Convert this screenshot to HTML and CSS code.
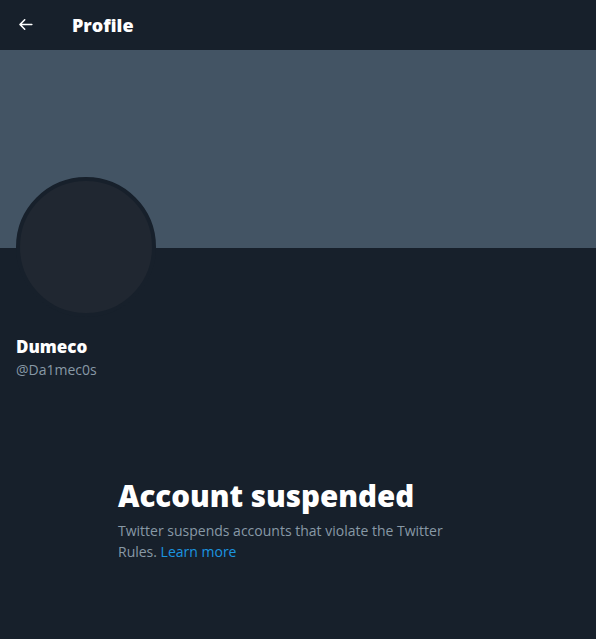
FILE: index.html
```html
<!DOCTYPE html>
<html>
<head>
<meta charset="utf-8">
<link rel="stylesheet" href="styles.css">
</head>
<body>
<div class="page">
  <header class="topbar">
    <div class="back">
      <svg viewBox="0 0 24 24" width="19" height="19"><path fill="#fff" d="M20 11H7.414l4.293-4.293c.39-.39.39-1.023 0-1.414s-1.023-.39-1.414 0l-6 6c-.39.39-.39 1.023 0 1.414l6 6c.195.195.45.293.707.293s.512-.098.707-.293c.39-.39.39-1.023 0-1.414L7.414 13H20c.553 0 1-.447 1-1s-.447-1-1-1z"/></svg>
    </div>
    <h1 class="title">Profile</h1>
  </header>
  <div class="banner"></div>
  <div class="profile">
    <div class="avatar"></div>
    <div class="name">Dumeco</div>
    <div class="handle">@Da1mec0s</div>
  </div>
  <div class="suspended">
    <h2 class="s-title">Account suspended</h2>
    <p class="s-text">Twitter suspends accounts that violate the Twitter Rules. <a href="#" class="link">Learn more</a></p>
  </div>
</div>
</body>
</html>
```
FILE: styles.css
```css
html, body {
  margin: 0;
  padding: 0;
  background: #17202b;
}
body {
  font-family: "Open Sans", "Noto Sans", "Liberation Sans", sans-serif;
  color: #fff;
}
.page {
  width: 596px;
  min-height: 639px;
  background: #17202b;
}
.topbar {
  height: 50px;
  display: flex;
  align-items: center;
  padding: 0 16px;
  box-sizing: border-box;
}
.back {
  width: 19px;
  height: 19px;
  display: flex;
  margin-left: 0;
  margin-top: -2px;
}
.title {
  margin: -1px 0 0 37px;
  font-size: 18px;
  font-weight: 800;
  line-height: 24px;
}
.banner {
  height: 198px;
  background: #435464;
}
.profile {
  padding: 0 16px;
}
.avatar {
  width: 132px;
  height: 132px;
  border-radius: 50%;
  background: #202731;
  border: 4px solid #17202b;
  margin-top: -71px;
}
.name {
  margin-top: 18px;
  font-size: 17px;
  font-weight: 800;
  line-height: 24px;
}
.handle {
  font-size: 14px;
  color: #8899a6;
  line-height: 20px;
  margin-top: 1px;
}
.suspended {
  padding: 0 118px;
  margin-top: 96px;
}
.s-title {
  margin: 0;
  font-size: 29.5px;
  font-weight: 800;
  line-height: 40px;
}
.s-text {
  margin: 4px 0 0;
  font-size: 14px;
  line-height: 21px;
  color: #8899a6;
}
.link {
  color: #1b95e0;
  text-decoration: none;
}
```
